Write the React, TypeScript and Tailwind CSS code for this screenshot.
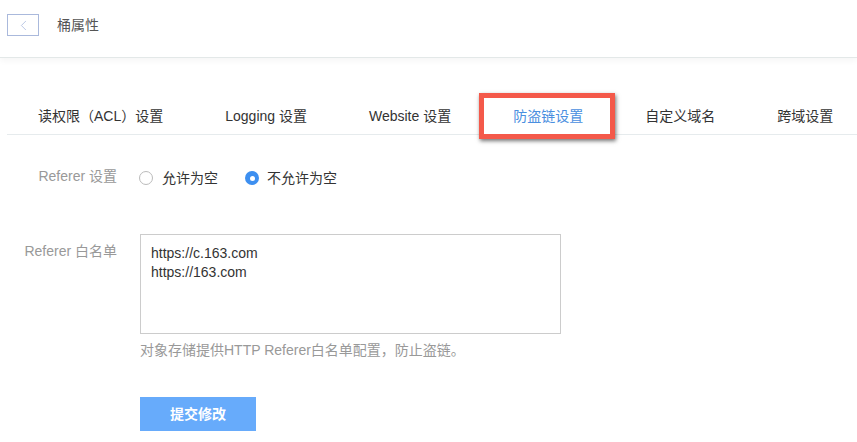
import { ChevronLeft } from "lucide-react";

const tabs = ["读权限（ACL）设置", "Logging 设置", "Website 设置", "防盗链设置", "自定义域名", "跨域设置"];

export default function App() {
  const active = 3;

  return (
    <div
      className="min-h-screen bg-white text-[14px] text-[#333]"
      style={{ fontFamily: '"Liberation Sans", "Noto Sans CJK SC", sans-serif' }}
    >
      {/* Header */}
      <div className="h-[58px] border-b border-[#e3e8e8] shadow-[0_3px_6px_rgba(0,20,20,0.04)] flex items-start pt-[14px] pl-[7px]">
        <button className="w-[32px] h-[22px] border border-[#aab9dc] flex items-center justify-center text-[#9fb1da]">
          <ChevronLeft className="w-[17px] h-[17px]" strokeWidth={1} />
        </button>
        <span className="ml-[18px] leading-[22px] text-[#555]">桶属性</span>
      </div>

      {/* Tabs */}
      <div className="mt-[40px] ml-[7px] flex border-b border-[#e6ebed]">
        {tabs.map((t, i) => (
          <div
            key={t}
            className={`relative h-[36px] px-[31px] flex items-center whitespace-nowrap ${
              i === active ? "text-[#4a8fe0]" : "text-[#333]"
            }`}
          >
            {i === active && (
              <span className="absolute -top-[5px] -bottom-[5px] -left-[3px] -right-[1px] border-[5px] border-[#f4594a] shadow-[1px_2px_4px_rgba(0,0,0,0.55)]" />
            )}
            <span className="relative">{t}</span>
          </div>
        ))}
      </div>

      {/* Referer setting */}
      <div className="mt-[33px] flex items-center h-[20px]">
        <div className="w-[117px] text-right text-[#999] leading-5 -mt-[4px]">Referer 设置</div>
        <div className="ml-[22px] flex items-center">
          <span className="w-[14px] h-[14px] rounded-full border border-[#bbbbbb] bg-white" />
          <span className="ml-[9px]">允许为空</span>
          <span className="ml-[27px] w-[14px] h-[14px] rounded-full bg-[#3d8ff0] flex items-center justify-center">
            <span className="w-[5px] h-[5px] rounded-full bg-white" />
          </span>
          <span className="ml-[8px]">不允许为空</span>
        </div>
      </div>

      {/* Whitelist */}
      <div className="mt-[46px] flex items-start">
        <div className="w-[117px] text-right text-[#999] leading-5 pt-[7px]">Referer 白名单</div>
        <div className="ml-[23px] flex flex-col">
          <textarea
            className="w-[421px] h-[100px] border border-[#cccccc] resize-none outline-none px-[10px] pt-[9px] leading-[19px] text-[#333] text-[14px]"
            defaultValue={"https://c.163.com\nhttps://163.com"}
          />
          <div className="mt-[6px] leading-5 text-[#999]">对象存储提供HTTP Referer白名单配置，防止盗链。</div>
          <button className="mt-[37px] w-[116px] h-[34px] bg-[#67abfb] text-white font-bold text-[14px]">
            提交修改
          </button>
        </div>
      </div>
    </div>
  );
}
